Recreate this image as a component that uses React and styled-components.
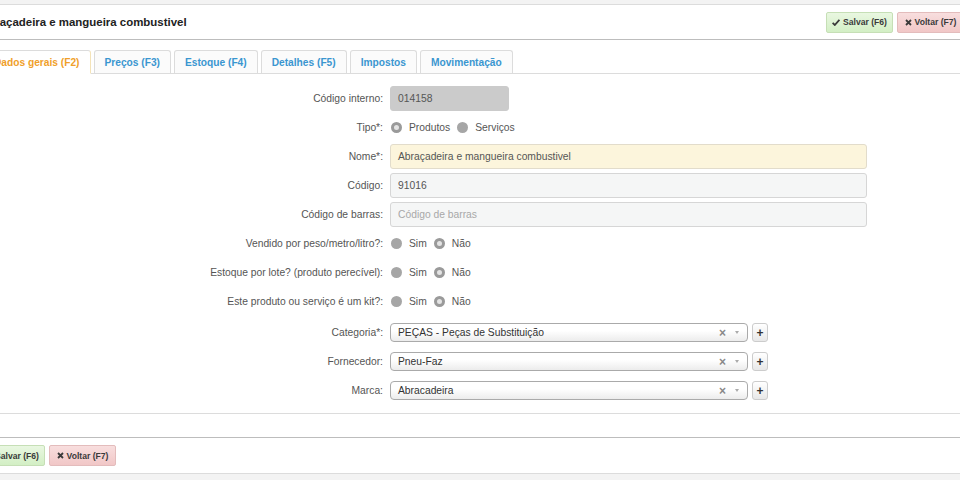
import styled, { createGlobalStyle } from "styled-components";

const GlobalStyle = createGlobalStyle`
  html, body {
    margin: 0;
    padding: 0;
    background: #f3f3f3;
    overflow: hidden;
    font-family: "Liberation Sans", Arial, sans-serif;
  }
`;

const Screen = styled.div`
  width: 960px;
  height: 480px;
  overflow: hidden;
  background: #f3f3f3;
`;

const TopStrip = styled.div`
  height: 4px;
  border-bottom: 1px solid #dcdcdc;
`;

// a página está deslocada para a esquerda, como no print
const Page = styled.div`
  margin-left: -30px;
  width: 1004px;
  background: #fff;
`;

const Header = styled.div`
  height: 34px;
  display: flex;
  align-items: center;
  justify-content: space-between;
  padding: 0 10px;
  border-bottom: 1px solid #bdbdbd;
`;

const Title = styled.div`
  font-size: 11.45px;
  font-weight: bold;
  color: #222;
`;

const ButtonGroup = styled.div`
  display: flex;
  gap: 4px;
`;

const ActionButton = styled.button`
  height: 21px;
  width: 67px;
  padding: 0;
  border-radius: 2px;
  font-family: inherit;
  font-size: 8.6px;
  font-weight: bold;
  color: #3a3a3a;
  border: 1px solid ${(p) => (p.$kind === "ok" ? "#c6dfb6" : "#e3bcbc")};
  background: ${(p) =>
    p.$kind === "ok"
      ? "linear-gradient(#e9f7e1, #d3efc5)"
      : "linear-gradient(#f8dede, #f1c7c7)"};
  display: flex;
  align-items: center;
  justify-content: center;
  gap: 3px;
`;

const Tabs = styled.div`
  margin-top: 10px;
  height: 23px;
  display: flex;
  gap: 3px;
  padding-left: 13px;
  border-bottom: 1px solid #dcdcdc;
`;

const Tab = styled.div`
  height: 22px;
  padding: 0 10px;
  display: flex;
  align-items: center;
  font-size: 10.2px;
  font-weight: bold;
  color: ${(p) => (p.$active ? "#f0a02a" : "#3a96d0")};
  background: ${(p) => (p.$active ? "#fff" : "#fbfbfb")};
  border: 1px solid #dcdcdc;
  border-right-color: ${(p) => (p.$active ? "#f4e3b8" : "#dcdcdc")};
  border-bottom: ${(p) => (p.$active ? "1px solid #fff" : "none")};
  border-radius: 3px 3px 0 0;
  margin-bottom: ${(p) => (p.$active ? "-1px" : "0")};
`;

const Form = styled.div`
  padding: 12px 0 7px;
  display: grid;
  grid-template-columns: 413px 477px;
  column-gap: 7px;
  row-gap: 4px;
  border-bottom: 1px solid #dcdcdc;
`;

const Label = styled.div`
  height: ${(p) => (p.$select ? "19px" : "25px")};
  margin-top: ${(p) => (p.$first ? "5px" : "0")};
  display: flex;
  align-items: center;
  justify-content: flex-end;
  font-size: 10.3px;
  color: #555;
`;

const Field = styled.div`
  height: 25px;
  display: flex;
  align-items: center;
`;

const SelectField = styled.div`
  height: 19px;
  margin-top: ${(p) => (p.$first ? "5px" : "0")};
  margin-bottom: 6px;
  display: flex;
  align-items: center;
  gap: 4px;
`;

const Input = styled.div`
  box-sizing: border-box;
  width: ${(p) => p.$width || "477px"};
  height: 25px;
  padding: 0 7px;
  display: flex;
  align-items: center;
  border-radius: 3px;
  font-size: 10.3px;
  color: ${(p) => (p.$placeholder ? "#a8a8a8" : "#555")};
  background: ${(p) => p.$bg || "#f5f6f6"};
  border: 1px solid ${(p) => p.$border || "#d6d6d6"};
`;

const RadioDot = styled.span`
  box-sizing: border-box;
  width: 11px;
  height: 11px;
  border-radius: 50%;
  margin: 0 7px 0 1px;
  background: ${(p) => (p.$checked ? "#e4e4e4" : "#a6a6a6")};
  border: ${(p) => (p.$checked ? "3px solid #9a9a9a" : "none")};
`;

const RadioText = styled.span`
  font-size: 10.3px;
  color: #555;
  margin-right: 6px;
`;

const Select = styled.div`
  box-sizing: border-box;
  width: 358px;
  height: 19px;
  padding: 0 8px 0 7px;
  display: flex;
  align-items: center;
  border: 1px solid #aaa;
  border-radius: 4px;
  background: linear-gradient(#fff 40%, #ececec);
  font-size: 10.3px;
  color: #333;
`;

const SelectText = styled.span`
  flex: 1;
`;

const Clear = styled.span`
  color: #888;
  font-size: 12px;
  font-weight: bold;
  margin-right: 9px;
`;

const Caret = styled.span`
  width: 0;
  height: 0;
  border-left: 2.5px solid transparent;
  border-right: 2.5px solid transparent;
  border-top: 3px solid #aaa;
`;

const PlusButton = styled.div`
  box-sizing: border-box;
  width: 16px;
  height: 19px;
  border: 1px solid #ccc;
  border-radius: 3px;
  background: linear-gradient(#fff, #e8e8e8);
  display: flex;
  align-items: center;
  justify-content: center;
  font-size: 12px;
  font-weight: bold;
  color: #333;
`;

const Spacer = styled.div`
  height: 23px;
`;

const Footer = styled.div`
  height: 35px;
  padding: 0 8px;
  display: flex;
  align-items: center;
  gap: 4px;
  border-top: 1px solid #bdbdbd;
  border-bottom: 1px solid #dcdcdc;
`;

const Check = () => (
  <svg width="8" height="7" viewBox="0 0 8 7">
    <path d="M0.6 3.8 L2.8 6 L7.4 0.8" fill="none" stroke="#3a3a3a" strokeWidth="1.8" />
  </svg>
);

const Cross = () => (
  <svg width="7" height="7" viewBox="0 0 7 7">
    <path d="M1 1 L6 6 M6 1 L1 6" fill="none" stroke="#3a3a3a" strokeWidth="1.8" />
  </svg>
);

const Buttons = () => (
  <ButtonGroup>
    <ActionButton $kind="ok">
      <Check /> Salvar (F6)
    </ActionButton>
    <ActionButton $kind="back">
      <Cross /> Voltar (F7)
    </ActionButton>
  </ButtonGroup>
);

const tabs = ["Dados gerais (F2)", "Preços (F3)", "Estoque (F4)", "Detalhes (F5)", "Impostos", "Movimentação"];

const yesNo = [
  "Vendido por peso/metro/litro?:",
  "Estoque por lote? (produto perecível):",
  "Este produto ou serviço é um kit?:",
];

const selects = [
  { label: "Categoria*:", value: "PEÇAS - Peças de Substituição" },
  { label: "Fornecedor:", value: "Pneu-Faz" },
  { label: "Marca:", value: "Abracadeira" },
];

const App = () => {
  return (
    <>
      <GlobalStyle />
      <Screen>
        <TopStrip />
        <Page>
          <Header>
            <Title>Abraçadeira e mangueira combustivel</Title>
            <Buttons />
          </Header>

          <Tabs>
            {tabs.map((t, i) => (
              <Tab key={t} $active={i === 0}>{t}</Tab>
            ))}
          </Tabs>

          <Form>
            <Label>Código interno:</Label>
            <Field>
              <Input $width="119px" $bg="#cbcbcb" $border="#cbcbcb">014158</Input>
            </Field>

            <Label>Tipo*:</Label>
            <Field>
              <RadioDot $checked />
              <RadioText>Produtos</RadioText>
              <RadioDot />
              <RadioText>Serviços</RadioText>
            </Field>

            <Label>Nome*:</Label>
            <Field>
              <Input $bg="#fcf5dc" $border="#e2dccb">Abraçadeira e mangueira combustivel</Input>
            </Field>

            <Label>Código:</Label>
            <Field>
              <Input>91016</Input>
            </Field>

            <Label>Código de barras:</Label>
            <Field>
              <Input $placeholder>Código de barras</Input>
            </Field>

            {yesNo.map((q) => (
              <>
                <Label key={q}>{q}</Label>
                <Field>
                  <RadioDot />
                  <RadioText>Sim</RadioText>
                  <RadioDot $checked />
                  <RadioText>Não</RadioText>
                </Field>
              </>
            ))}

            {selects.map((s, i) => (
              <>
                <Label key={s.label} $select $first={i === 0}>{s.label}</Label>
                <SelectField $first={i === 0}>
                  <Select>
                    <SelectText>{s.value}</SelectText>
                    <Clear>×</Clear>
                    <Caret />
                  </Select>
                  <PlusButton>+</PlusButton>
                </SelectField>
              </>
            ))}
          </Form>

          <Spacer />

          <Footer>
            <Buttons />
          </Footer>
        </Page>
      </Screen>
    </>
  );
};

export default App;
